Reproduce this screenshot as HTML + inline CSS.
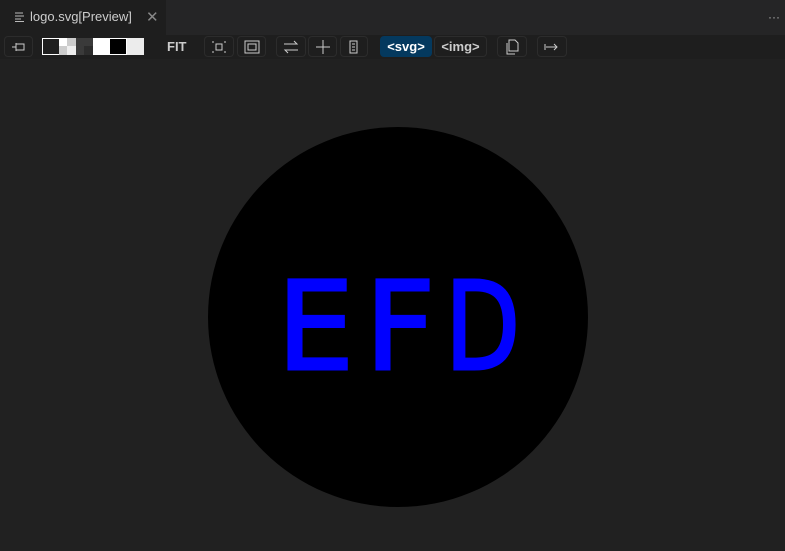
<!DOCTYPE html>
<html><head><style>
body{margin:0;width:785px;height:551px;background:#212121;font-family:"Liberation Sans",sans-serif;overflow:hidden;position:relative}
.tabbar{position:absolute;left:0;top:0;width:785px;height:35px;background:#252526}
.tab{position:absolute;left:0;top:0;width:166px;height:35px;background:#1e1e1e;color:#ccc;font-size:13px}
.tb{position:absolute;top:35px;left:0;width:785px;height:24px;background:#1e1e1e}
.b{position:absolute;top:36px;height:21px;border:1px solid #2c2c2c;border-radius:4px;box-sizing:border-box;color:#ccc;font-size:13px;text-align:center;line-height:19px}
.sw{position:absolute;top:38px;height:17px;width:17px}
</style></head><body>
<div class="tabbar"></div>
<div class="tab">
<svg style="position:absolute;left:15px;top:12px" width="10" height="10"><path d="M0 1h8M0 4h9M0 7h6M0 9.5h9" stroke="#bbb" stroke-width="1"/></svg>
<span style="position:absolute;left:30px;top:9px">logo.svg[Preview]</span>
<span style="position:absolute;left:146px;top:8px;color:#888;font-size:15px">✕</span>
</div>
<div style="position:absolute;left:768px;top:10px;color:#aaa;font-size:12px">···</div>
<div class="tb"></div>
<div class="b" style="left:4px;width:29px"><svg width="16" height="14" style="margin-top:3px"><path d="M1 7h4M5 3v8M5 4h8v6H5" stroke="#ccc" fill="none"/></svg></div>
<div style="position:absolute;left:42px;top:38px;width:102px;height:17px;background:#fff"></div>
<div class="sw" style="left:43px;top:39px;height:15px;width:16px;background:#1f1f1f"></div>
<div class="sw" style="left:59px;background:#eee"></div><div style="position:absolute;left:59px;top:38px;width:8px;height:8px;background:#fff"></div><div style="position:absolute;left:67px;top:38px;width:9px;height:8px;background:#ccc"></div><div style="position:absolute;left:59px;top:46px;width:8px;height:9px;background:#ccc"></div>
<div class="sw" style="left:76px;background:#3a3a3a"></div><div style="position:absolute;left:84px;top:46px;width:9px;height:9px;background:#2c2c2c"></div>
<div class="sw" style="left:110px;top:39px;height:15px;width:16px;background:#000"></div>
<div class="sw" style="left:127px;background:#ececec"></div>
<div style="position:absolute;left:167px;top:39px;color:#ccc;font-size:13px;font-weight:bold">FIT</div>
<div class="b" style="left:204px;width:30px"><svg width="16" height="14" style="margin-top:3px"><path d="M2 1v2M14 1v2M2 11v2M14 11v2M5 4h6v6H5z" stroke="#ccc" fill="none"/></svg></div>
<div class="b" style="left:237px;width:29px"><svg width="16" height="14" style="margin-top:3px"><path d="M1 1h14v12H1zM4 4h8v6H4z" stroke="#ccc" fill="none"/></svg></div>
<div class="b" style="left:276px;width:30px"><svg width="16" height="14" style="margin-top:3px"><path d="M1 4h13l-3-3M15 10H2l3 3" stroke="#ccc" fill="none"/></svg></div>
<div class="b" style="left:308px;width:29px"><svg width="16" height="14" style="margin-top:3px"><path d="M8 0v14M1 7h14" stroke="#ccc" fill="none"/></svg></div>
<div class="b" style="left:340px;width:28px"><svg width="16" height="14" style="margin-top:3px"><path d="M4 1h7v12H4zM6 4h3M6 7h3M6 10h3" stroke="#ccc" fill="none"/></svg></div>
<div class="b" style="left:380px;width:52px;background:#04395e;border-color:#04395e;color:#fff;font-weight:bold">&lt;svg&gt;</div>
<div class="b" style="left:434px;width:53px;font-weight:bold">&lt;img&gt;</div>
<div class="b" style="left:497px;width:30px"><svg width="16" height="16" style="margin-top:2px"><path d="M5 1h6l3 3v8H5zM3 4v11h8" stroke="#ccc" fill="none"/></svg></div>
<div class="b" style="left:537px;width:30px"><svg width="16" height="14" style="margin-top:3px"><path d="M1 4v6M2 7h11M10 4l3 3-3 3" stroke="#ccc" fill="none"/></svg></div>
<svg style="position:absolute;left:0;top:0" width="785" height="551">
<circle cx="398" cy="317" r="190" fill="#000"/>
<g font-family="DejaVu Sans, sans-serif" font-size="122" fill="#0000ff" stroke="#0000ff" stroke-width="3">
<text x="277" y="369">E</text>
<text x="365" y="369">F</text>
<text transform="translate(445,369) scale(0.8,1)" x="0" y="0">D</text>
</g>
</svg>
</body></html>
